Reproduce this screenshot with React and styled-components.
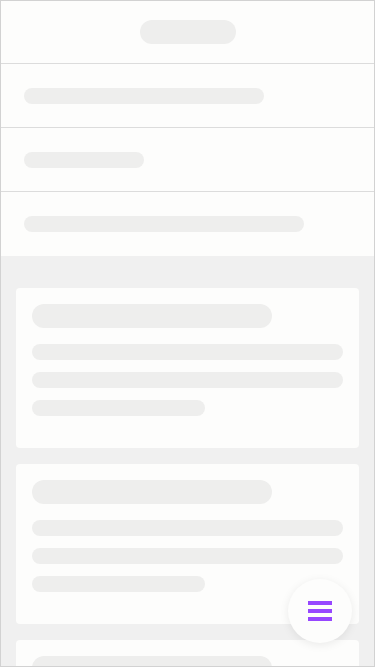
import React from "react";
import styled, { createGlobalStyle } from "styled-components";

const GlobalStyle = createGlobalStyle`
  html, body {
    margin: 0;
    padding: 0;
    background: #f0f0f0;
    font-family: "Inter", "Liberation Sans", sans-serif;
  }
  * {
    box-sizing: border-box;
  }
`;

const Page = styled.div`
  position: relative;
  width: 375px;
  height: 667px;
  overflow: hidden;
  border: 1px solid #d2d2d2;
  background: #f0f0f0;
`;

const Header = styled.div`
  height: 63px;
  display: flex;
  align-items: center;
  justify-content: center;
  background: #fdfdfc;
  border-bottom: 1px solid #dcdcdc;
`;

const Row = styled.div`
  height: 64px;
  display: flex;
  align-items: center;
  padding: 0 23px;
  background: #fdfdfc;
  border-bottom: ${(p) => (p.last ? "none" : "1px solid #dcdcdc")};
`;

// 스켈레톤 막대
const Bar = styled.div`
  width: ${(p) => p.w};
  height: ${(p) => p.h || 16}px;
  border-radius: ${(p) => (p.h || 16) / 2}px;
  background: #eeeeed;
  flex-shrink: 0;
`;

const List = styled.div`
  display: flex;
  flex-direction: column;
  gap: 16px;
  padding: 32px 15px 0;
`;

const Card = styled.div`
  height: 160px;
  display: flex;
  flex-direction: column;
  gap: 12px;
  padding: 16px;
  border-radius: 4px;
  background: #fdfdfc;
`;

const CardTitle = styled(Bar)`
  margin-bottom: 4px;
`;

const Fab = styled.button`
  position: absolute;
  left: 287px;
  top: 578px;
  width: 64px;
  height: 64px;
  border: none;
  border-radius: 50%;
  background: #fdfdfc;
  box-shadow: 0 2px 10px rgba(0, 0, 0, 0.08);
  display: flex;
  flex-direction: column;
  align-items: center;
  justify-content: center;
  gap: 4px;
  padding: 0;
  cursor: pointer;
`;

const FabLine = styled.span`
  display: block;
  width: 24px;
  height: 4px;
  background: #9747ff;
`;

const cards = [1, 2, 3];

const App = () => {
  return (
    <>
      <GlobalStyle />
      <Page>
        <Header>
          <Bar w="96px" h={24} />
        </Header>
        <Row>
          <Bar w="240px" />
        </Row>
        <Row>
          <Bar w="120px" />
        </Row>
        <Row last>
          <Bar w="280px" />
        </Row>

        <List>
          {cards.map((c) => (
            <Card key={c}>
              <CardTitle w="240px" h={24} />
              <Bar w="311px" />
              <Bar w="311px" />
              <Bar w="173px" />
            </Card>
          ))}
        </List>

        <Fab aria-label="menu">
          <FabLine />
          <FabLine />
          <FabLine />
        </Fab>
      </Page>
    </>
  );
};

export default App;
